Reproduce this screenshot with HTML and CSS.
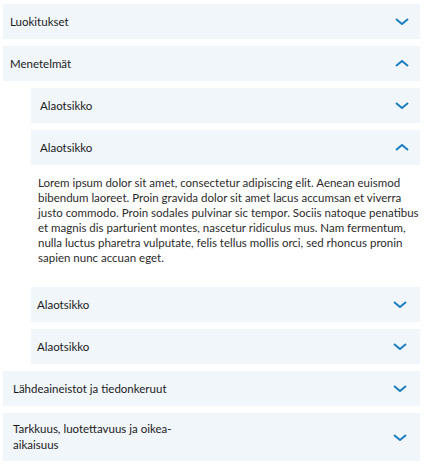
FILE: index.html
```html
<!DOCTYPE html>
<html lang="fi">
<head>
<meta charset="utf-8">
<link rel="stylesheet" href="styles.css">
</head>
<body>
<div class="accordion">
  <div class="item">
    <div class="header">
      <span class="title">Luokitukset</span>
      <svg class="chev" viewBox="0 0 14 7"><polyline points="1,1 7,6 13,1"/></svg>
    </div>
  </div>
  <div class="item open">
    <div class="header">
      <span class="title">Menetelmät</span>
      <svg class="chev" viewBox="0 0 14 7"><polyline points="1,6 7,1 13,6"/></svg>
    </div>
    <div class="content">
      <div class="item sub">
        <div class="header">
          <span class="title">Alaotsikko</span>
          <svg class="chev" viewBox="0 0 14 7"><polyline points="1,1 7,6 13,1"/></svg>
        </div>
      </div>
      <div class="item sub open">
        <div class="header">
          <span class="title">Alaotsikko</span>
          <svg class="chev" viewBox="0 0 14 7"><polyline points="1,6 7,1 13,6"/></svg>
        </div>
        <p class="body-text">Lorem ipsum dolor sit amet, consectetur adipiscing elit. Aenean euismod bibendum laoreet. Proin gravida dolor sit amet lacus accumsan et viverra justo commodo. Proin sodales pulvinar sic tempor. Sociis natoque penatibus et magnis dis parturient montes, nascetur ridiculus mus. Nam fermentum, nulla luctus pharetra vulputate, felis tellus mollis orci, sed rhoncus pronin sapien nunc accuan eget.</p>
      </div>
      <div class="item sub tight">
        <div class="header">
          <span class="title">Alaotsikko</span>
          <svg class="chev" viewBox="0 0 14 7"><polyline points="1,1 7,6 13,1"/></svg>
        </div>
      </div>
      <div class="item sub tight">
        <div class="header">
          <span class="title">Alaotsikko</span>
          <svg class="chev" viewBox="0 0 14 7"><polyline points="1,1 7,6 13,1"/></svg>
        </div>
      </div>
    </div>
  </div>
  <div class="item loose">
    <div class="header">
      <span class="title">Lähdeaineistot ja tiedonkeruut</span>
      <svg class="chev" viewBox="0 0 14 7"><polyline points="1,1 7,6 13,1"/></svg>
    </div>
  </div>
  <div class="item loose">
    <div class="header">
      <span class="title narrow">Tarkkuus, luotettavuus ja oikea-aikaisuus</span>
      <svg class="chev" viewBox="0 0 14 7"><polyline points="1,1 7,6 13,1"/></svg>
    </div>
  </div>
</div>
</body>
</html>
```
FILE: styles.css
```css
html, body {
  background: #ffffff;
}
body {
  margin: 4px 6px 0 3px;
  font-family: Lato, "Open Sans", sans-serif;
  color: #1a1a1a;
}
.accordion {
  display: flex;
  flex-direction: column;
  gap: 7px;
}
.item {
  display: flex;
  flex-direction: column;
}
.header {
  background: #f1f6fb;
  min-height: 35px;
  box-sizing: border-box;
  display: flex;
  align-items: center;
  justify-content: space-between;
  padding: 8px 11px 8px 7px;
}
.title {
  font-size: 11.5px;
  line-height: 16px;
}
.title.narrow {
  max-width: 182px;
}
.chev {
  width: 14px;
  height: 7px;
  flex: none;
  fill: none;
  stroke: #1b7ec2;
  stroke-width: 2;
}
.content {
  display: flex;
  flex-direction: column;
  gap: 7px;
  padding: 7px 0 0 28px;
}
.sub .header {
  padding-left: 9px;
}
.sub.tight .header {
  padding-left: 6px;
  padding-right: 13px;
}
.loose .header {
  padding-left: 10px;
  padding-right: 13px;
}
.body-text {
  margin: 10px 0 15px 7px;
  font-size: 11.5px;
  line-height: 15px;
  color: #2b2b2b;
}
```
